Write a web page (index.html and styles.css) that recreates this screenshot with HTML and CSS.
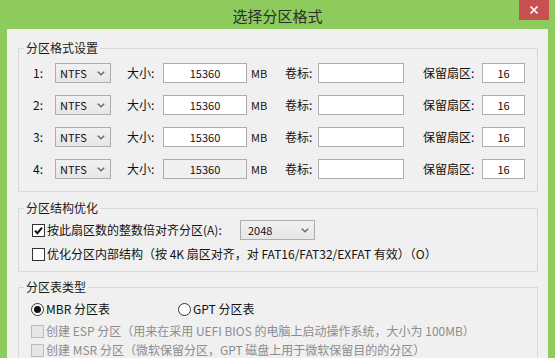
FILE: index.html
```html
<!DOCTYPE html>
<html lang="zh-CN">
<head>
<meta charset="utf-8">
<title>选择分区格式</title>
<link rel="stylesheet" href="styles.css">
</head>
<body>
<div class="window">
  <div class="titlebar">
    <span class="spacer"></span>
    <h1 class="title">选择分区格式</h1>
    <div class="close"><svg width="10" height="10" viewBox="0 0 10 10"><path d="M1.5 1.5 L8.5 8.5 M8.5 1.5 L1.5 8.5" stroke="#fff" stroke-width="1.7" fill="none"/></svg></div>
  </div>
  <div class="client">
    <fieldset class="group g1">
      <legend>分区格式设置</legend>
      <div class="prow">
        <span class="num">1:</span>
        <div class="select fs"><span>NTFS</span><svg class="chev" width="8" height="5" viewBox="0 0 8 5"><path d="M0.8 0.8 L4 3.8 L7.2 0.8" stroke="#6a6a6a" stroke-width="1.5" fill="none"/></svg></div>
        <span class="lbl l-size">大小:</span>
        <input class="tb t-size" value="15360">
        <span class="unit">MB</span>
        <span class="lbl l-vol">卷标:</span>
        <input class="tb t-vol" value="">
        <span class="lbl l-res">保留扇区:</span>
        <input class="tb t-res" value="16">
      </div>
      <div class="prow">
        <span class="num">2:</span>
        <div class="select fs"><span>NTFS</span><svg class="chev" width="8" height="5" viewBox="0 0 8 5"><path d="M0.8 0.8 L4 3.8 L7.2 0.8" stroke="#6a6a6a" stroke-width="1.5" fill="none"/></svg></div>
        <span class="lbl l-size">大小:</span>
        <input class="tb t-size" value="15360">
        <span class="unit">MB</span>
        <span class="lbl l-vol">卷标:</span>
        <input class="tb t-vol" value="">
        <span class="lbl l-res">保留扇区:</span>
        <input class="tb t-res" value="16">
      </div>
      <div class="prow">
        <span class="num">3:</span>
        <div class="select fs"><span>NTFS</span><svg class="chev" width="8" height="5" viewBox="0 0 8 5"><path d="M0.8 0.8 L4 3.8 L7.2 0.8" stroke="#6a6a6a" stroke-width="1.5" fill="none"/></svg></div>
        <span class="lbl l-size">大小:</span>
        <input class="tb t-size" value="15360">
        <span class="unit">MB</span>
        <span class="lbl l-vol">卷标:</span>
        <input class="tb t-vol" value="">
        <span class="lbl l-res">保留扇区:</span>
        <input class="tb t-res" value="16">
      </div>
      <div class="prow">
        <span class="num">4:</span>
        <div class="select fs"><span>NTFS</span><svg class="chev" width="8" height="5" viewBox="0 0 8 5"><path d="M0.8 0.8 L4 3.8 L7.2 0.8" stroke="#6a6a6a" stroke-width="1.5" fill="none"/></svg></div>
        <span class="lbl l-size">大小:</span>
        <input class="tb t-size ro" value="15360" readonly>
        <span class="unit">MB</span>
        <span class="lbl l-vol">卷标:</span>
        <input class="tb t-vol" value="">
        <span class="lbl l-res">保留扇区:</span>
        <input class="tb t-res" value="16">
      </div>
    </fieldset>

    <fieldset class="group g2">
      <legend>分区结构优化</legend>
      <div class="crow crow-first">
        <span class="cb"><svg width="11" height="11" viewBox="0 0 11 11"><path d="M2 5.6 L4.4 8.2 L9 2.6" stroke="#111" stroke-width="2" fill="none"/></svg></span>
        <span class="ctext align-text">按此扇区数的整数倍对齐分区(A):</span>
        <div class="select align"><span>2048</span><svg class="chev" width="8" height="5" viewBox="0 0 8 5"><path d="M0.8 0.8 L4 3.8 L7.2 0.8" stroke="#6a6a6a" stroke-width="1.5" fill="none"/></svg></div>
      </div>
      <div class="crow crow-second">
        <span class="cb"></span>
        <span class="ctext">优化分区内部结构（按 4K 扇区对齐，对 FAT16/FAT32/EXFAT 有效）（O）</span>
      </div>
    </fieldset>

    <fieldset class="group g3">
      <legend>分区表类型</legend>
      <div class="rrow">
        <span class="radio-item first"><span class="radio on"></span><span class="ctext">MBR 分区表</span></span>
        <span class="radio-item"><span class="radio"></span><span class="ctext">GPT 分区表</span></span>
      </div>
      <div class="crow dis dis-first">
        <span class="cb"></span>
        <span class="ctext">创建 ESP 分区（用来在采用 UEFI BIOS 的电脑上启动操作系统，大小为 100MB）</span>
      </div>
      <div class="crow dis dis-second">
        <span class="cb"></span>
        <span class="ctext">创建 MSR 分区（微软保留分区，GPT 磁盘上用于微软保留目的的分区）</span>
      </div>
    </fieldset>
  </div>
</div>
</body>
</html>
```

FILE: styles.css
```css
* { box-sizing: border-box; }
html, body { margin: 0; padding: 0; }
body {
  background: #8dcb5d;
  font-family: "Noto Sans CJK SC", "Noto Sans", sans-serif;
  font-size: 12px;
  line-height: 16px;
  color: #111;
}
.window {
  width: 555px;
  height: 358px;
  overflow: hidden;
  background: #8dcb5d;
}
.titlebar {
  height: 29px;
  display: grid;
  grid-template-columns: 1fr auto 1fr;
  align-items: center;
}
.title {
  margin: 0;
  padding-top: 3px;
  font-size: 15px;
  font-weight: normal;
  line-height: 20px;
  color: #2c2c2c;
}
.close {
  justify-self: end;
  align-self: start;
  width: 30px;
  height: 20px;
  margin-right: 6px;
  background: #c75050;
  display: flex;
  align-items: center;
  justify-content: center;
}
.client {
  margin: 0 7px;
  height: 329px;
  background: #f0f0f0;
  padding-top: 11px;
}
.group {
  margin: 0 10px 0 11px;
  padding: 0;
  border: 1px solid #d9d9d9;
  min-width: 0;
}
.group legend {
  margin-left: 5px;
  padding: 0 2px;
  line-height: 16px;
  color: #1a1a1a;
}
.g1 { padding: 7px 0 12px 0; }
.g2 { margin-top: 8px; padding: 4px 0 8px 0; }
.g3 { margin-top: 7px; padding: 6px 0 20px 0; }

.prow {
  display: flex;
  align-items: center;
  height: 20px;
  padding-left: 14px;
}
.prow + .prow { margin-top: 12px; }
.num { width: 22px; flex: none; }
.lbl, .unit { flex: none; }
.l-size { width: 36px; margin-left: 16px; }
.unit { width: 38px; padding-left: 4px; font-size: 11px; }
.l-vol { width: 33px; }
.l-res { width: 59px; margin-left: 19px; }

.select {
  flex: none;
  height: 20px;
  border: 1px solid #adadad;
  background: linear-gradient(#f1f1f1, #e6e6e6);
  display: flex;
  align-items: center;
  justify-content: space-between;
  padding: 0 5px 0 4px;
  font-size: 11px;
}
.select.fs { width: 56px; }
.select.align { width: 75px; padding-left: 7px; }
.chev { flex: none; }

.tb {
  flex: none;
  height: 20px;
  margin: 0;
  padding: 0;
  border: 1px solid #abadb3;
  background: #fff;
  font-family: "Noto Sans CJK SC", "Noto Sans", sans-serif;
  font-size: 11px;
  color: #111;
  text-align: center;
  outline: none;
}
.tb.ro { background: #f0f0f0; }
.t-size { width: 84px; }
.t-vol { width: 86px; }
.t-res { width: 43px; }

.crow {
  display: flex;
  align-items: center;
  height: 18px;
  padding-left: 13px;
}
.crow-first { height: 20px; }
.crow-second { margin-top: 5px; }
.cb {
  flex: none;
  width: 13px;
  height: 13px;
  border: 1px solid #333;
  background: #fff;
  display: flex;
  align-items: center;
  justify-content: center;
  margin-right: 2px;
}
.ctext { white-space: nowrap; }
.align-text { width: 193px; flex: none; }

.rrow {
  display: flex;
  align-items: center;
  height: 16px;
  padding-left: 12px;
}
.radio-item { display: flex; align-items: center; }
.radio-item.first { width: 147px; }
.radio {
  flex: none;
  width: 13px;
  height: 13px;
  border: 1px solid #333;
  border-radius: 50%;
  background: #fff;
  margin-right: 2px;
  display: flex;
  align-items: center;
  justify-content: center;
}
.radio.on::after {
  content: "";
  width: 7px;
  height: 7px;
  border-radius: 50%;
  background: #111;
}
.dis { color: #8c8c8c; padding-left: 12px; }
.dis .cb { border-color: #bcbcbc; background: #e6e6e6; }
.dis-first { margin-top: 6px; height: 16px; }
.dis-second { margin-top: 3px; height: 16px; }
```
